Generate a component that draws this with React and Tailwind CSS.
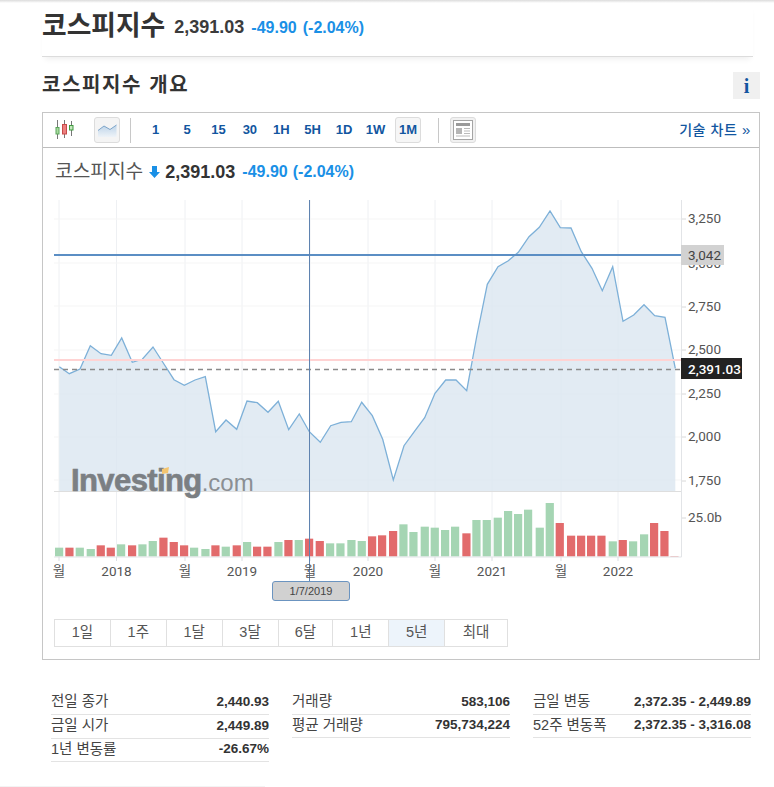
const KR = { fontFamily: '"Liberation Sans", "Noto Sans CJK KR", sans-serif' };
const RB = 'Roboto, "Noto Sans CJK KR", sans-serif';

const linePts = [[59.3,366.7],[69.3,373.7],[80,369],[90.3,345.7],[101,353.7],[111.3,355.3],[121.7,338],[132.3,362.3],[142.3,359.3],[153,347],[163.3,363],[174,379.7],[184.3,385.3],[195,380],[205.3,376.7],[215.7,431.7],[226,420],[236.7,429.3],[247,401],[257.3,402.7],[268,412.3],[278.3,401.3],[288.7,429.7],[299.3,414],[309.3,431.7],[320.3,442.3],[330.7,425.7],[341,422.3],[351.3,421.7],[361.7,402.3],[372.3,415.7],[382.7,439.3],[393.3,480],[404,445.7],[414.3,431.7],[424.7,417.7],[435,393.3],[445.7,380],[456,380],[466.7,390.7],[477,335],[487.3,284.3],[498,266.7],[508.3,260.7],[518.3,252.3],[529,236.7],[539.3,227.3],[550,211],[560.3,227.7],[571,228],[581.3,251.7],[592,268.3],[602.3,290.7],[612.7,266.7],[623,321.3],[633.7,315],[644,304.7],[654.7,315.7],[665,317.3],[675.3,368.3]];
const linePath = linePts.map((p) => p.join(',')).join(' ');
const areaPath = `59.3,491 ${linePath} 675.3,491`;

const G = '#a5d5b3';
const R = '#e26b6c';
const barsA = [[45,503,G],[76,503,R],[107,503,G],[140,507,G],[170,496,R],[200,503,R],[231,493,G],[264,496,R],[295,493,G],[326,483,G],[358,473,R],[389,486,R],[420,496,R],[450,503,G],[484,507,G],[514,496,R],[545,500,G],[578,496,R],[609,486,G],[639,500,R],[670,500,R],[703,486,G],[733,480,R],[764,480,G],[795,476,R],[827,483,R],[858,490,G],[889,490,G],[922,480,G],[953,483,G],[984,469,R]];
const barsB = [[-6,466,R],[27,453,R],[58,433,G],[88,456,G],[122,440,G],[152,443,G],[183,450,G],[213,440,G],[247,460,R],[277,420,G],[308,420,G],[341,413,G],[372,393,G],[402,402,G],[432,389,G],[467,443,G],[497,369,G],[527,429,R],[561,467,R],[591,467,R],[621,467,R],[652,467,R],[686,484,G],[716,480,R],[747,484,G],[780,463,G],[810,429,R],[841,453,R],[871,528,R]];
const bars = [
  ...barsA.map(([a, t, c]) => ({ x: 40 + a / 3, y: 380 + t / 3, c })),
  ...barsB.map(([a, t, c]) => ({ x: 380 + a / 3, y: 380 + t / 3, c })),
];

const gridX = [59, 116.5, 185, 242, 310, 368, 435, 492, 561, 618];
const gridY = [219, 263, 306, 350, 394, 437, 480];
const yLabels = [['3,250', 218], ['3,000', 263], ['2,750', 306], ['2,500', 349], ['2,250', 393], ['2,000', 436], ['1,750', 480], ['25.0b', 517]];
const xLabels = [['월', 59], ['2018', 116.5], ['월', 185], ['2019', 242], ['월', 310], ['2020', 368], ['월', 435], ['2021', 492], ['월', 561], ['2022', 618]];

function Chart() {
  return (
    <svg viewBox="43 190 715 420" className="block w-[715px] h-[420px]">
      {gridX.map((x) => <line key={x} x1={x} x2={x} y1="200" y2="557" stroke="#eef0f3" />)}
      {gridY.map((y) => <line key={y} x1="54" x2="681" y1={y} y2={y} stroke="#f5f5f5" />)}
      <polygon points={areaPath} fill="#dbe6f0" fillOpacity="0.8" />
      <polyline points={linePath} fill="none" stroke="#7db0d8" strokeWidth="1.3" />
      <line x1="54" x2="681.5" y1="491.5" y2="491.5" stroke="#dedede" strokeWidth="1.2" />
      <text x="71" y="491" fill="#7b7f83" fontFamily="Liberation Sans, sans-serif">
        <tspan fontSize="31" fontWeight="700" letterSpacing="-0.6" stroke="#7b7f83" strokeWidth="0.7">Investing</tspan>
        <tspan fontSize="24" fill="#8b8f93">.com</tspan>
      </text>
      <polygon points="162,469 169,467 168,473 162,474" fill="#f4c56f" />
      {bars.map((b, i) => <rect key={i} x={b.x} y={b.y} width="8.2" height={556.5 - b.y} fill={b.c} />)}
      <line x1="54" x2="681.5" y1="557" y2="557" stroke="#e2e4e7" />
      <line x1="681.5" x2="681.5" y1="200" y2="557" stroke="#e2e4e7" />
      {gridX.map((x) => <line key={x} x1={x} x2={x} y1="557" y2="561" stroke="#dcdfe3" />)}
      {yLabels.map(([t, y]) => <line key={t} x1="682" x2="686" y1={y + 1} y2={y + 1} stroke="#d8d8d8" />)}
      <line x1="54" x2="681.5" y1="360" y2="360" stroke="#ffd3d3" strokeWidth="2" />
      <line x1="54" x2="681.5" y1="369.5" y2="369.5" stroke="#8a8a8a" strokeWidth="1.4" strokeDasharray="5 4" />
      <line x1="54" x2="681.5" y1="255" y2="255" stroke="#5b8ec4" strokeWidth="2" />
      <line x1="309.5" x2="309.5" y1="200" y2="582" stroke="#5f83b0" strokeWidth="1" />
      {yLabels.map(([t, y]) => (
        <text key={t} x="688" y={y + 5} fill="#555" fontSize="13.5" fontFamily={RB}>{t}</text>
      ))}
      {xLabels.map(([t, x], i) => (
        <text key={i} x={x} y="576" textAnchor="middle" fill="#555" fontSize="13.5" fontFamily={RB}>{t}</text>
      ))}
      <rect x="681" y="245" width="43" height="20" fill="#d2d2d2" />
      <text x="688" y="260" fill="#444" fontSize="13.5" fontFamily={RB}>3,042</text>
      <rect x="681" y="358" width="61" height="21" fill="#222" />
      <text x="688" y="373.5" fill="#fff" fontSize="13.5" fontWeight="500" fontFamily={RB}>2,391.03</text>
      <rect x="272.5" y="581.5" width="77" height="19" rx="2.5" fill="#d1d1d1" stroke="#6b94c0" />
      <text x="311" y="595" textAnchor="middle" fill="#444" fontSize="11" fontFamily="Liberation Sans, sans-serif">1/7/2019</text>
    </svg>
  );
}

function CandleIcon() {
  return (
    <svg width="20" height="20" viewBox="0 0 20 20" className="block">
      <path d="M2.500 0v19M9.500 0v18M16.500 1v15" stroke="#777" strokeWidth="1" fill="none" />
      <rect x="1" y="7.500" width="3" height="6.500" fill="#a9dba0" stroke="#5aa55a" />
      <rect x="7.500" y="4.500" width="4" height="9.500" fill="#ec8080" stroke="#c74a4a" />
      <rect x="14.500" y="5.500" width="3.500" height="4.500" fill="#c4e8bd" stroke="#3f9a3f" />
    </svg>
  );
}

function AreaIcon() {
  return (
    <svg width="19" height="14" viewBox="0 0 19 14" className="block">
      <defs>
        <linearGradient id="areaFade" x1="0" x2="0" y1="0" y2="1">
          <stop offset="0" stopColor="#bcd3e8" />
          <stop offset="1" stopColor="#eef3f8" />
        </linearGradient>
      </defs>
      <path d="M0 7.500 L6 3 L12 6.500 L18.500 2 V14 H0 Z" fill="url(#areaFade)" />
      <path d="M0 7.500 L6 3 L12 6.500 L18.500 2" fill="none" stroke="#7da4c9" strokeWidth="1" />
    </svg>
  );
}

function LayoutIcon() {
  return (
    <svg width="20" height="20" viewBox="0 0 20 20" className="block">
      <rect x="0.500" y="0.500" width="19" height="19" fill="#fff" stroke="#a5a5a5" />
      <rect x="3" y="3" width="14" height="3" fill="#9a9a9a" />
      <rect x="3" y="8" width="6" height="6" fill="#b5b5b5" />
      <path d="M11 8.500h6M11 11h6M11 13.500h6M3 16h14" stroke="#bbb" strokeWidth="1" />
    </svg>
  );
}

const tf = ['1', '5', '15', '30', '1H', '5H', '1D', '1W'];
const ranges = [['1일', 56], ['1주', 56], ['1달', 56], ['3달', 56], ['6달', 55], ['1년', 56], ['5년', 56], ['최대', 62]];

const stats = [
  [['전일 종가', '2,440.93'], ['금일 시가', '2,449.89'], ['1년 변동률', '-26.67%']],
  [['거래량', '583,106'], ['평균 거래량', '795,734,224']],
  [['금일 변동', '2,372.35 - 2,449.89'], ['52주 변동폭', '2,372.35 - 3,316.08']],
];

export default function App() {
  return (
    <div className="relative w-[774px] h-[787px] overflow-hidden bg-white text-[#333]" style={KR}>
      <div className="h-[3px] bg-gradient-to-b from-[#dcdcdc] to-white" />
      <div className="mx-[42px] w-[711px] h-[54px] flex items-center gap-[9px] pb-[7px] border-b border-[#dcdcdc] shadow-[0_5px_6px_-3px_rgba(0,0,0,0.07)]">
        <h1 className="text-[26.800px] font-bold leading-none text-[#333]">코스피지수</h1>
        <div className="flex items-baseline gap-[7px] mt-[2px]">
          <span className="text-[18px] font-bold text-[#3b3b3b]">2,391.03</span>
          <span className="text-[16px] font-bold text-[#1a90e6]">-49.90</span>
          <span className="text-[16px] font-bold text-[#1a90e6] -ml-px">(-2.04%)</span>
        </div>
      </div>

      <div className="mx-[42px] mt-[15px] w-[718px] h-[27px] flex items-center justify-between">
        <h2 className="text-[20px] font-bold tracking-[1.600px] text-[#333] mb-[2px]">코스피지수 개요</h2>
        <div className="w-[27px] h-[27px] bg-[#f0f0f0] flex items-center justify-center text-[20px] font-bold text-[#1256a0]" style={{ fontFamily: '"Liberation Serif", serif' }}>i</div>
      </div>

      <div className="ml-[42px] mt-[13px] w-[718px] h-[548px] border border-[#c6c6c6]">
        <div className="h-[35px] flex items-center border-b border-[#bdbdbd] relative">
          <div className="ml-[12px] w-[20px]"><CandleIcon /></div>
          <div className="ml-[19px] w-[26px] h-[26px] border border-[#dcdcdc] rounded-[3px] bg-[#f4f4f4] flex items-center justify-center"><AreaIcon /></div>
          <div className="ml-[10px] w-px h-[25px] bg-[#c8c8c8]" />
          <div className="ml-[9px] flex text-[13px] font-bold text-[#1256a0]">
            {tf.map((t) => <span key={t} className="w-[31.400px] text-center">{t}</span>)}
          </div>
          <div className="w-[26px] h-[26px] ml-[4px] border border-[#dcdcdc] rounded-[3px] bg-[#f6f6f6] flex items-center justify-center text-[13px] font-bold text-[#1256a0]">1M</div>
          <div className="ml-[17px] w-px h-[25px] bg-[#c8c8c8]" />
          <div className="ml-[11px] w-[26px] h-[26px] border border-[#dcdcdc] rounded-[3px] bg-[#f1f1f1] flex items-center justify-center"><LayoutIcon /></div>
          <div className="ml-auto mr-[8px] text-[14px] tracking-[0.600px] text-[#1256a0] font-medium whitespace-nowrap">기술 차트 <span className="text-[15px] font-normal">»</span></div>
        </div>
        <div className="h-[42px] pl-[12px] pt-[5px] flex items-center leading-none">
          <span className="text-[19.200px] text-[#555]">코스피지수</span>
          <svg width="11" height="12" viewBox="0 0 11 12" className="ml-[6px] mt-[1px]"><path d="M3 0h5v6h3L5.500 12 0 6h3z" fill="#1a90e6" /></svg>
          <span className="ml-[5px] text-[18px] font-bold text-[#333]">2,391.03</span>
          <span className="ml-[7px] text-[16px] font-bold text-[#1a90e6]">-49.90</span>
          <span className="ml-[5px] text-[16px] font-bold text-[#1a90e6]">(-2.04%)</span>
        </div>
        <Chart />
        <div className="ml-[11px] mt-[9px] flex w-[454px] h-[28px] border border-[#e0e0e0]">
          {ranges.map(([t, w], i) => (
            <div key={t} style={{ width: w }} className={`flex items-center justify-center text-[14.500px] text-[#555] ${i < 7 ? 'border-r border-[#e0e0e0]' : ''} ${t === '5년' ? 'bg-[#edf4fb]' : ''}`}>{t}</div>
          ))}
        </div>
      </div>

      <div className="ml-[51px] mt-[31px] flex gap-[23px]">
        {stats.map((col, i) => (
          <div key={i} className="w-[218px]">
            {col.map(([k, v]) => (
              <div key={k} className="h-[24px] last:h-[23px] pb-[1px] flex items-center justify-between border-b border-[#e3e3e3] text-[#333]">
                <span className="text-[14.500px] text-[#444]">{k}</span>
                <span className="text-[13.500px] font-bold">{v}</span>
              </div>
            ))}
          </div>
        ))}
      </div>
      <div className="absolute left-0 bottom-0 w-[265px] h-px bg-[#f3f3f3]" />
    </div>
  );
}
